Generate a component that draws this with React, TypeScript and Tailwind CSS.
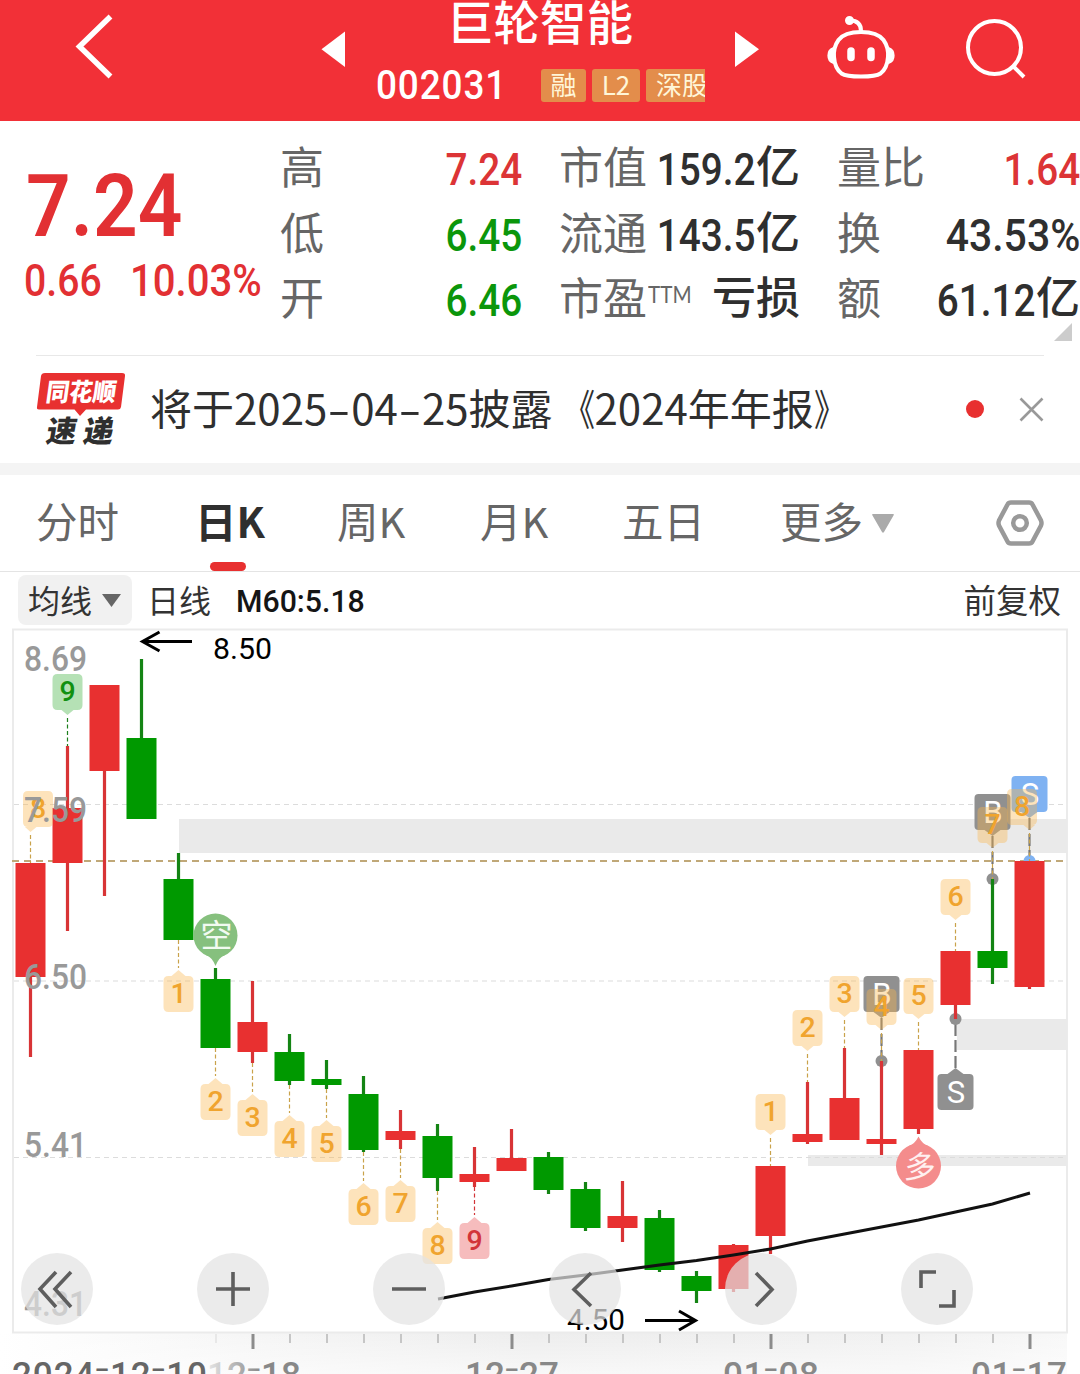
import { ReactNode } from "react";
import clsx from "clsx";

const RED = "#e83030";
const GREEN = "#009900";
const NUM_FONT = '"Roboto", sans-serif';
const CJK_FONT = '"Noto Sans CJK SC", sans-serif';

// [open/close top, open/close bottom, high, low, rising]
type Candle = [number, number, number, number, boolean];

const candles: Candle[] = [
  [863, 977, 863, 1057, true],
  [808, 863, 746, 931, true],
  [685, 771, 685, 896, true],
  [738, 819, 659, 819, false],
  [879, 940, 853, 940, false],
  [979, 1048, 968, 1048, false],
  [1022, 1052, 981, 1063, true],
  [1052, 1081, 1034, 1085, false],
  [1079, 1085, 1060, 1089, false],
  [1094, 1150, 1076, 1152, false],
  [1131, 1140, 1110, 1149, true],
  [1136, 1178, 1124, 1191, false],
  [1174, 1182, 1147, 1187, true],
  [1158, 1171, 1129, 1171, true],
  [1157, 1190, 1152, 1194, false],
  [1189, 1228, 1182, 1231, false],
  [1216, 1228, 1181, 1242, true],
  [1218, 1270, 1210, 1272, false],
  [1276, 1291, 1271, 1303, false],
  [1245, 1289, 1244, 1292, true],
  [1166, 1236, 1166, 1254, true],
  [1134, 1142, 1082, 1144, true],
  [1098, 1140, 1048, 1140, true],
  [1139, 1144, 1061, 1155, true],
  [1050, 1129, 1050, 1134, true],
  [951, 1005, 951, 1019, true],
  [951, 968, 879, 984, false],
  [861, 987, 861, 989, true],
];

const candleX = (i: number) => 30.5 + i * 37;

interface CountMark {
  i: number;
  n: string;
  top: number;
  above?: boolean;
  dx?: number;
  tone?: "orange" | "green" | "red";
}

const countMarks: CountMark[] = [
  { i: 0, n: "8", top: 791, above: true, dx: 7.5 },
  { i: 1, n: "9", top: 674, above: true, tone: "green" },
  { i: 4, n: "1", top: 976 },
  { i: 5, n: "2", top: 1084 },
  { i: 6, n: "3", top: 1100 },
  { i: 7, n: "4", top: 1121 },
  { i: 8, n: "5", top: 1126 },
  { i: 9, n: "6", top: 1189 },
  { i: 10, n: "7", top: 1186 },
  { i: 11, n: "8", top: 1228 },
  { i: 12, n: "9", top: 1223, tone: "red" },
  { i: 20, n: "1", top: 1094, above: true },
  { i: 21, n: "2", top: 1010, above: true },
  { i: 22, n: "3", top: 976, above: true },
  { i: 23, n: "4", top: 989, above: true },
  { i: 24, n: "5", top: 978, above: true },
  { i: 25, n: "6", top: 879, above: true },
  { i: 26, n: "7", top: 807, above: true },
  { i: 27, n: "8", top: 789, above: true, dx: -7.5 },
];

const tones = {
  orange: { bg: "rgba(250,181,76,0.38)", text: "#f0a42e", line: "#c9a24a" },
  green: { bg: "#b5e1b5", text: "#119011", line: "#1c7f1c" },
  red: { bg: "#f6bcbd", text: "#d23438", line: "#d23438" },
};

function CountBadge({ i, n, top, above, dx = 0, tone = "orange" }: CountMark) {
  const x = candleX(i);
  const c = tones[tone];
  const [, , high, low] = candles[i];
  const cx = x + dx;
  const l = cx - 15;
  const r = cx + 15;
  const b = top + 36;
  const d = above
    ? `M${l + 5} ${top}H${r - 5}Q${r} ${top} ${r} ${top + 5}V${b - 5}Q${r} ${b} ${r - 5} ${b}H${Math.min(x + 6, r - 2)}L${x} ${b + 5}L${Math.max(x - 6, l + 2)} ${b}H${l + 5}Q${l} ${b} ${l} ${b - 5}V${top + 5}Q${l} ${top} ${l + 5} ${top}Z`
    : `M${l + 5} ${top}H${x - 7}L${x} ${top - 6}L${x + 7} ${top}H${r - 5}Q${r} ${top} ${r} ${top + 5}V${b - 5}Q${r} ${b} ${r - 5} ${b}H${l + 5}Q${l} ${b} ${l} ${b - 5}V${top + 5}Q${l} ${top} ${l + 5} ${top}Z`;
  return (
    <g>
      <line x1={x} x2={x} y1={above ? b + 8 : low} y2={above ? high : top - 8} stroke={c.line} strokeWidth="1.2" strokeDasharray="4 2.5" />
      <path d={d} fill={c.bg} />
      <text x={cx} y={top + 27} fill={c.text} fontSize="28.5" fontWeight="500" fontFamily={NUM_FONT} textAnchor="middle">
        {n}
      </text>
    </g>
  );
}

function TradeMark({ i, label, top, dot, color }: { i: number; label: string; top: number; dot: number; color: string }) {
  const x = candleX(i);
  const below = dot < top;
  const edge = below ? top : top + 36;
  const tip = below ? top - 6 : top + 42;
  return (
    <g>
      <line x1={x} x2={x} y1={tip} y2={dot} stroke="#777" strokeWidth="2.2" strokeDasharray="12 4" />
      <circle cx={x} cy={dot} r="6" fill={color} />
      <rect x={x - 18} y={top} width="36" height="36" rx="4" fill={color} />
      <path d={`M${x - 8} ${edge}L${x} ${tip}L${x + 8} ${edge}Z`} fill={color} />
      <text x={x + 0.5} y={top + 29} fill="#fff" fontSize="31" fontFamily={NUM_FONT} textAnchor="middle">
        {label}
      </text>
    </g>
  );
}

function PriceLabel({ y, children }: { y: number; children: string }) {
  return (
    <text x="24" y={y} fill="#999" fontSize="35" fontWeight="500" fontFamily={NUM_FONT} textLength="63" lengthAdjust="spacingAndGlyphs">
      {children}
    </text>
  );
}

function DateLabel({ x, width, fill, children }: { x: number; width: number; fill: string; children: string }) {
  return (
    <text x={x} y="1387" fill={fill} fontSize="35" fontWeight="500" fontFamily={NUM_FONT} textLength={width} lengthAdjust="spacing">
      {children.split(/(-)/).map((part, k) =>
        part === "-" ? (
          <tspan key={k} fontSize="48" fontWeight="300" dy="-2">-</tspan>
        ) : (
          <tspan key={k} dy={k > 0 ? 2 : 0}>{part}</tspan>
        )
      )}
    </text>
  );
}

function KLineChart() {
  return (
    <svg className="block" width="1080" height="746" viewBox="0 628 1080 746">
      <defs>
        <linearGradient id="axisBg" x1="0" x2="1" y1="0" y2="0">
          <stop offset="0" stopColor="#fff" />
          <stop offset="0.25" stopColor="#f5f5f5" />
          <stop offset="0.5" stopColor="#ededed" />
          <stop offset="0.85" stopColor="#f1f1f1" />
          <stop offset="1" stopColor="#f8f8f8" />
        </linearGradient>
        <linearGradient id="axisFade" x1="0" x2="0" y1="0" y2="1">
          <stop offset="0" stopColor="#fff" stopOpacity="0" />
          <stop offset="1" stopColor="#fff" stopOpacity="0.6" />
        </linearGradient>
        <linearGradient id="dateFade" gradientUnits="userSpaceOnUse" x1="207" x2="262" y1="0" y2="0">
          <stop offset="0" stopColor="#e6e6e6" />
          <stop offset="1" stopColor="#888" />
        </linearGradient>
      </defs>

      {/* time axis */}
      <rect x="0" y="1333" width="1067" height="41" fill="url(#axisBg)" />
      <rect x="0" y="1333" width="1067" height="41" fill="url(#axisFade)" />
      {candles.slice(5).map((_, k) => {
        const i = k + 5;
        const major = (i - 6) % 7 === 0;
        return (
          <line
            key={i}
            x1={candleX(i) + 0.5}
            x2={candleX(i) + 0.5}
            y1="1334"
            y2={major ? 1349 : 1343}
            stroke={major ? "#8c8c8c" : i === 5 ? "#e8e8e8" : "#c6c6c6"}
            strokeWidth={major ? 3 : 2}
          />
        );
      })}
      <DateLabel x={12} width={195} fill="#666">2024-12-10</DateLabel>
      <DateLabel x={207} width={94} fill="url(#dateFade)">12-18</DateLabel>
      <DateLabel x={465} width={94} fill="#888">12-27</DateLabel>
      <DateLabel x={723} width={96} fill="#888">01-08</DateLabel>
      <DateLabel x={971} width={96} fill="#888">01-17</DateLabel>

      {/* frame and gaps */}
      <rect x="13" y="629.5" width="1054" height="703" fill="none" stroke="#ebebeb" strokeWidth="2" />
      <rect x="179" y="819" width="888" height="34" fill="#eaeaea" />
      <rect x="957" y="1019" width="110" height="31" fill="#eaeaea" />
      <rect x="808" y="1155" width="259" height="11" fill="#eaeaea" />
      {[804.5, 981, 1157.5].map((y) => (
        <line key={y} x1="14" x2="1066" y1={y} y2={y} stroke="#dcdcdc" strokeWidth="1.2" strokeDasharray="5 4" />
      ))}
      <line x1="12" x2="1067" y1="861" y2="861" stroke="#c0a878" strokeWidth="2" strokeDasharray="7 5" />

      <TradeMark i={23} label="B" top={976} dot={1061} color="#909090" />
      <TradeMark i={26} label="B" top={794} dot={879} color="#909090" />
      <TradeMark i={27} label="S" top={776} dot={861} color="#7fb2f2" />
      <TradeMark i={25} label="S" top={1074} dot={1019} color="#909090" />

      {candles.map(([top, bottom, high, low, up], i) => (
        <g key={i} fill={up ? RED : GREEN}>
          <rect x={candleX(i) - 1.6} y={high} width="3.2" height={low - high} fill={up ? "#d83436" : "#148414"} />
          <rect x={candleX(i) - 15} y={top} width="30" height={bottom - top} />
        </g>
      ))}

      <polyline
        points="438,1299 474.5,1292 511.5,1286 548.5,1279.5 585.5,1275 622.5,1270 659.5,1265 696.5,1260.5 733.5,1255 770.5,1249 807.5,1241 844.5,1234 881.5,1227 918.5,1220 955.5,1212 992.5,1204 1030,1193"
        fill="none"
        stroke="#111"
        strokeWidth="3"
      />

      {countMarks.map((m) => (
        <CountBadge key={m.i} {...m} />
      ))}

      {/* bear / bull signal pins */}
      <g fill="#86c07e">
        <circle cx="215.5" cy="935.5" r="22" />
        <path d="M206 955Q212 957 215.500 966Q219 957 225 955Z" />
        <text x="216.5" y="947" fill="#f2faf1" fontSize="32" fontFamily={CJK_FONT} textAnchor="middle">空</text>
      </g>
      <g fill="#f48c8c">
        <circle cx="918.5" cy="1166" r="22.5" />
        <path d="M908 1146.500Q915 1144 918.500 1136.500Q922 1144 929 1146.500Z" />
        <text transform="translate(919 1178) skewX(-6)" fill="#fff0f0" fontSize="31" fontFamily={CJK_FONT} textAnchor="middle">多</text>
      </g>

      <PriceLabel y={671}>8.69</PriceLabel>
      <PriceLabel y={822}>7.59</PriceLabel>
      <PriceLabel y={989}>6.50</PriceLabel>
      <PriceLabel y={1157}>5.41</PriceLabel>
      <PriceLabel y={1316}>4.31</PriceLabel>

      {/* highest / lowest */}
      <g stroke="#000" strokeWidth="3" fill="none">
        <path d="M192 641.500H143M159.500 632L142.500 641.500L159.500 651" />
        <path d="M645 1320.500H695M679 1311L695.500 1320.500L679 1330" />
      </g>
      <g fill="#000" fontSize="30" fontFamily={NUM_FONT}>
        <text x="213" y="659" textLength="59" lengthAdjust="spacingAndGlyphs">8.50</text>
        <text x="567" y="1330" textLength="58" lengthAdjust="spacingAndGlyphs">4.50</text>
      </g>
    </svg>
  );
}

const chartButtons = [
  "M35 19L19 36L35 54M50 19L34 36L50 54",
  "M19 36H53M36 19V53",
  "M19 36H53",
  "M42 20L25 36.500L42 53",
  "M31 20L47 36.500L31 53",
  "M35 19H20V35M38 53H53V37",
];

function ChartButtons() {
  return (
    <div className="absolute top-[625px] left-[21px] flex gap-[104px]">
      {chartButtons.map((d) => (
        <button key={d} className="h-[72px] w-[72px] rounded-full bg-[rgba(227,227,227,0.71)]">
          <svg width="72" height="72" viewBox="0 0 72 72" fill="none" stroke="#5e5e5e" strokeWidth="3.600">
            <path d={d} />
          </svg>
        </button>
      ))}
    </div>
  );
}

function Tag({ className, children }: { className: string; children: ReactNode }) {
  return (
    <span className={clsx("flex h-[33px] shrink-0 items-center rounded-[3px] bg-[#e38d4b] pb-[3px] text-[26px] leading-none text-[#fff6d8]", className)}>
      {children}
    </span>
  );
}

function Header() {
  return (
    <header className="flex h-[121px] items-start overflow-hidden bg-[#f23037] text-white">
      <svg className="mt-[12px] ml-[74px]" width="40" height="68" viewBox="0 0 40 68" fill="none" stroke="#fff" strokeWidth="5.500">
        <path d="M36.500 4.500L5.500 34.500L36.500 64.500" />
      </svg>
      <svg className="mt-[31px] ml-[207px]" width="25" height="37" viewBox="0 0 25 37" fill="#fff">
        <path d="M0.500 18.200L24 0.500V36Z" />
      </svg>
      <div className="ml-[30px] w-[329px]">
        <h1 className="h-[66px] pl-[71px] text-[46.500px] leading-[39px] font-medium whitespace-nowrap">巨轮智能</h1>
        <div className="flex items-center gap-[6px] overflow-hidden">
          <span className="mr-[14px] w-[145px] origin-left scale-x-[0.9] font-[Roboto] text-[41px] leading-[38px] font-medium tracking-[1px]">002031</span>
          <Tag className="w-[45px] justify-center">融</Tag>
          <Tag className="w-[48px] justify-center">L2</Tag>
          <Tag className="w-[70px] pl-[10px]">深股</Tag>
        </div>
      </div>
      <svg className="mt-[31px] ml-[30px]" width="25" height="37" viewBox="0 0 25 37" fill="#fff">
        <path d="M24 18.200L0 0.500V36Z" />
      </svg>
      <svg className="mt-[14px] ml-[65px]" width="72" height="68" viewBox="0 0 72 68" fill="none" stroke="#fff" strokeWidth="4">
        <path d="M36 18C46 18 54 20 58.500 26C62 31 63.500 37 63 43C62.500 50 60 56 55.500 59.500C51 62.500 44 62.500 36 62.500C28 62.500 21 62.500 16.500 59.500C12 56 9.500 50 9 43C8.500 37 10 31 13.500 26C18 20 26 18 36 18Z" />
        <path d="M36 17C36 10 32 6.500 25 6.500" />
        <circle cx="24.500" cy="6.500" r="2.500" fill="#fff" />
        <path d="M8 34C1.500 36 1.500 47 8 49ZM64 34C70.500 36 70.500 47 64 49Z" fill="#fff" strokeWidth="1.500" />
        <path d="M26 37V43.500M46 37V43.500" strokeWidth="7.500" strokeLinecap="round" />
      </svg>
      <svg className="mt-[17px] ml-[68px]" width="64" height="64" viewBox="0 0 64 64" fill="none" stroke="#fff" strokeWidth="4">
        <circle cx="29.500" cy="30.500" r="26.500" />
        <path d="M48 49L59 60" />
      </svg>
    </header>
  );
}

function QuoteRow({ label, sup, value, unit, tone }: { label: string; sup?: string; value?: string; unit?: string; tone?: string }) {
  return (
    <div className="flex h-[65.500px] items-baseline justify-between leading-[65.500px] whitespace-nowrap">
      <span className="relative -top-[1px] text-[44px] text-[#666]">
        {label}
        {sup && <span className="absolute top-[-3px] left-full ml-[1px] origin-left scale-x-[0.860] font-[Lato] text-[24px]">{sup}</span>}
      </span>
      <span className={clsx("flex items-baseline font-medium", tone || "text-[#2f2f2f]")}>
        {value && (
          <span className={clsx("-ml-[16px] inline-block origin-right font-[Roboto] text-[44.500px]", value.endsWith("%") ? "scale-x-[0.920]" : "scale-x-[0.870]")}>
            {value}
          </span>
        )}
        {unit && <span className="relative -top-[2px] text-[44px]">{unit}</span>}
      </span>
    </div>
  );
}

function Quote() {
  return (
    <section className="flex h-[234px] pt-[13px]">
      <div className="w-[280px] shrink-0 pl-[24px] font-[Roboto] text-[#e23033]">
        <div className="mt-[21px] ml-[2px] origin-left scale-x-[0.890] text-[88px] leading-[102px] font-semibold">7.24</div>
        <div className="mt-[-2px] flex text-[44.500px] leading-[52px] font-medium">
          <span className="w-[106px] origin-left scale-x-[0.880]">0.66</span>
          <span className="origin-left scale-x-[0.900]">10.03%</span>
        </div>
      </div>
      <div className="w-[242px] shrink-0">
        <QuoteRow label="高" value="7.24" tone="text-[#dc3436]" />
        <QuoteRow label="低" value="6.45" tone="text-[#0b960b]" />
        <QuoteRow label="开" value="6.46" tone="text-[#0b960b]" />
      </div>
      <div className="ml-[37px] w-[241px] shrink-0">
        <QuoteRow label="市值" value="159.2" unit="亿" />
        <QuoteRow label="流通" value="143.5" unit="亿" />
        <QuoteRow label="市盈" sup="TTM" unit="亏损" />
      </div>
      <div className="relative ml-[37px] w-[243px] shrink-0">
        <QuoteRow label="量比" value="1.64" tone="text-[#dc3436]" />
        <QuoteRow label="换" value="43.53%" />
        <QuoteRow label="额" value="61.12" unit="亿" />
        <svg className="absolute top-[189px] right-[8px]" width="18" height="18" viewBox="0 0 18 18" fill="#ccc">
          <path d="M18 0V18H0Z" />
        </svg>
      </div>
    </section>
  );
}

function Dash() {
  return <span className="inline-block w-[24px] scale-x-[1.600] text-center">-</span>;
}

function News() {
  return (
    <section className="mx-[36px] flex h-[108px] items-center border-t border-[#e8e8e8]">
      <svg className="mb-[4px]" width="92" height="76" viewBox="0 0 92 76">
        <path d="M9 3H86Q89.500 3 89 6L85 37Q84.500 39.500 82 39.500H50L44 46L38.500 39.500H3Q0.500 39.500 1 37L5 6Q5.500 3 9 3Z" fill="#e83030" />
        <text transform="translate(9 31) skewX(-8)" fill="#fff" fontSize="25" fontWeight="900" fontFamily={CJK_FONT} textLength="70" lengthAdjust="spacingAndGlyphs">同花顺</text>
        <text transform="translate(9 71.500) skewX(-10)" fill="#2f2f2f" fontSize="30" fontWeight="900" fontFamily={CJK_FONT} textLength="67">速递</text>
      </svg>
      <p className="mb-[5px] ml-[22px] text-[42px] leading-none whitespace-nowrap text-[#2f2f2f]">
        将于<span>2025</span>
        <Dash />
        <span>04</span>
        <Dash />
        <span>25</span>披露<span className="inline-block origin-right scale-x-[0.750]">《</span>
        <span>2024</span>年年报<span className="inline-block origin-left scale-x-[0.750]">》</span>
      </p>
      <span className="mb-[2px] ml-auto h-[18px] w-[18px] rounded-full bg-[#e83030]" />
      <svg className="mb-[1px] ml-[35px]" width="25" height="25" viewBox="0 0 25 25" stroke="#999" strokeWidth="2.600">
        <path d="M1.500 1.500L23.500 23.500M23.500 1.500L1.500 23.500" />
      </svg>
    </section>
  );
}

const tabs = [
  { label: "分时", width: "w-[159px]" },
  { label: "日K", width: "w-[142px]", active: true },
  { label: "周K", width: "w-[143px]" },
  { label: "月K", width: "w-[142px]" },
  { label: "五日", width: "w-[158px]" },
  { label: "更多", width: "w-[92px]" },
];

function Tabs() {
  return (
    <nav className="flex h-[97px] items-start border-b border-[#e4e4e4] pl-[36px] text-[41.500px] leading-[91px] text-[#666]">
      {tabs.map((tab) => (
        <div key={tab.label} className={clsx("relative", tab.width, tab.active && "font-bold text-[#2f2f2f]")}>
          {tab.label}
          {tab.active && <span className="absolute top-[87px] left-[15px] h-[9px] w-[36px] rounded-full bg-[#e83030]" />}
        </div>
      ))}
      <svg className="self-center" width="22" height="19" viewBox="0 0 22 19" fill="#aaa">
        <path d="M1 0H21Q22.500 0 21.500 1.500L12 18Q11 19.500 10 18L0.500 1.500Q-0.500 0 1 0Z" />
      </svg>
      <svg className="ml-[100px] self-center" width="52" height="50" viewBox="0 0 52 50" fill="none" stroke="#999" strokeWidth="4.500">
        <path d="M17 4.500H35Q37.500 4.500 38.500 6.500L47 22.500Q48 25 47 27.500L38.500 43.500Q37.500 45.500 35 45.500H17Q14.500 45.500 13.500 43.500L5 27.500Q4 25 5 22.500L13.500 6.500Q14.500 4.500 17 4.500Z" />
        <circle cx="26" cy="25" r="6.800" />
      </svg>
    </nav>
  );
}

function Indicators() {
  return (
    <div className="flex h-[56px] items-center pr-[19px] pl-[18px] text-[32px] leading-none text-[#333]">
      <button className="flex h-[50px] w-[114px] items-center gap-[10px] rounded-[8px] bg-[#f1f1f1] pl-[10px]">
        <span className="mb-[2px]">均线</span>
        <svg width="19" height="13" viewBox="0 0 19 13" fill="#666">
          <path d="M0 0H19L9.500 13Z" />
        </svg>
      </button>
      <span className="mb-[2px] ml-[15px]">日线</span>
      <span className="ml-[25px] origin-left scale-x-[0.945] pt-[2px] font-[Roboto] text-[32px] font-medium text-[#151515]">M60:5.18</span>
      <span className="mb-[2px] ml-auto text-[32.500px]">前复权</span>
    </div>
  );
}

export default function App() {
  return (
    <main className="h-[1374px] w-[1080px] overflow-hidden bg-white font-['Noto_Sans_CJK_SC',sans-serif]">
      <Header />
      <Quote />
      <News />
      <div className="h-[12px] bg-[#f4f4f4]" />
      <Tabs />
      <Indicators />
      <div className="relative">
        <KLineChart />
        <ChartButtons />
      </div>
    </main>
  );
}
